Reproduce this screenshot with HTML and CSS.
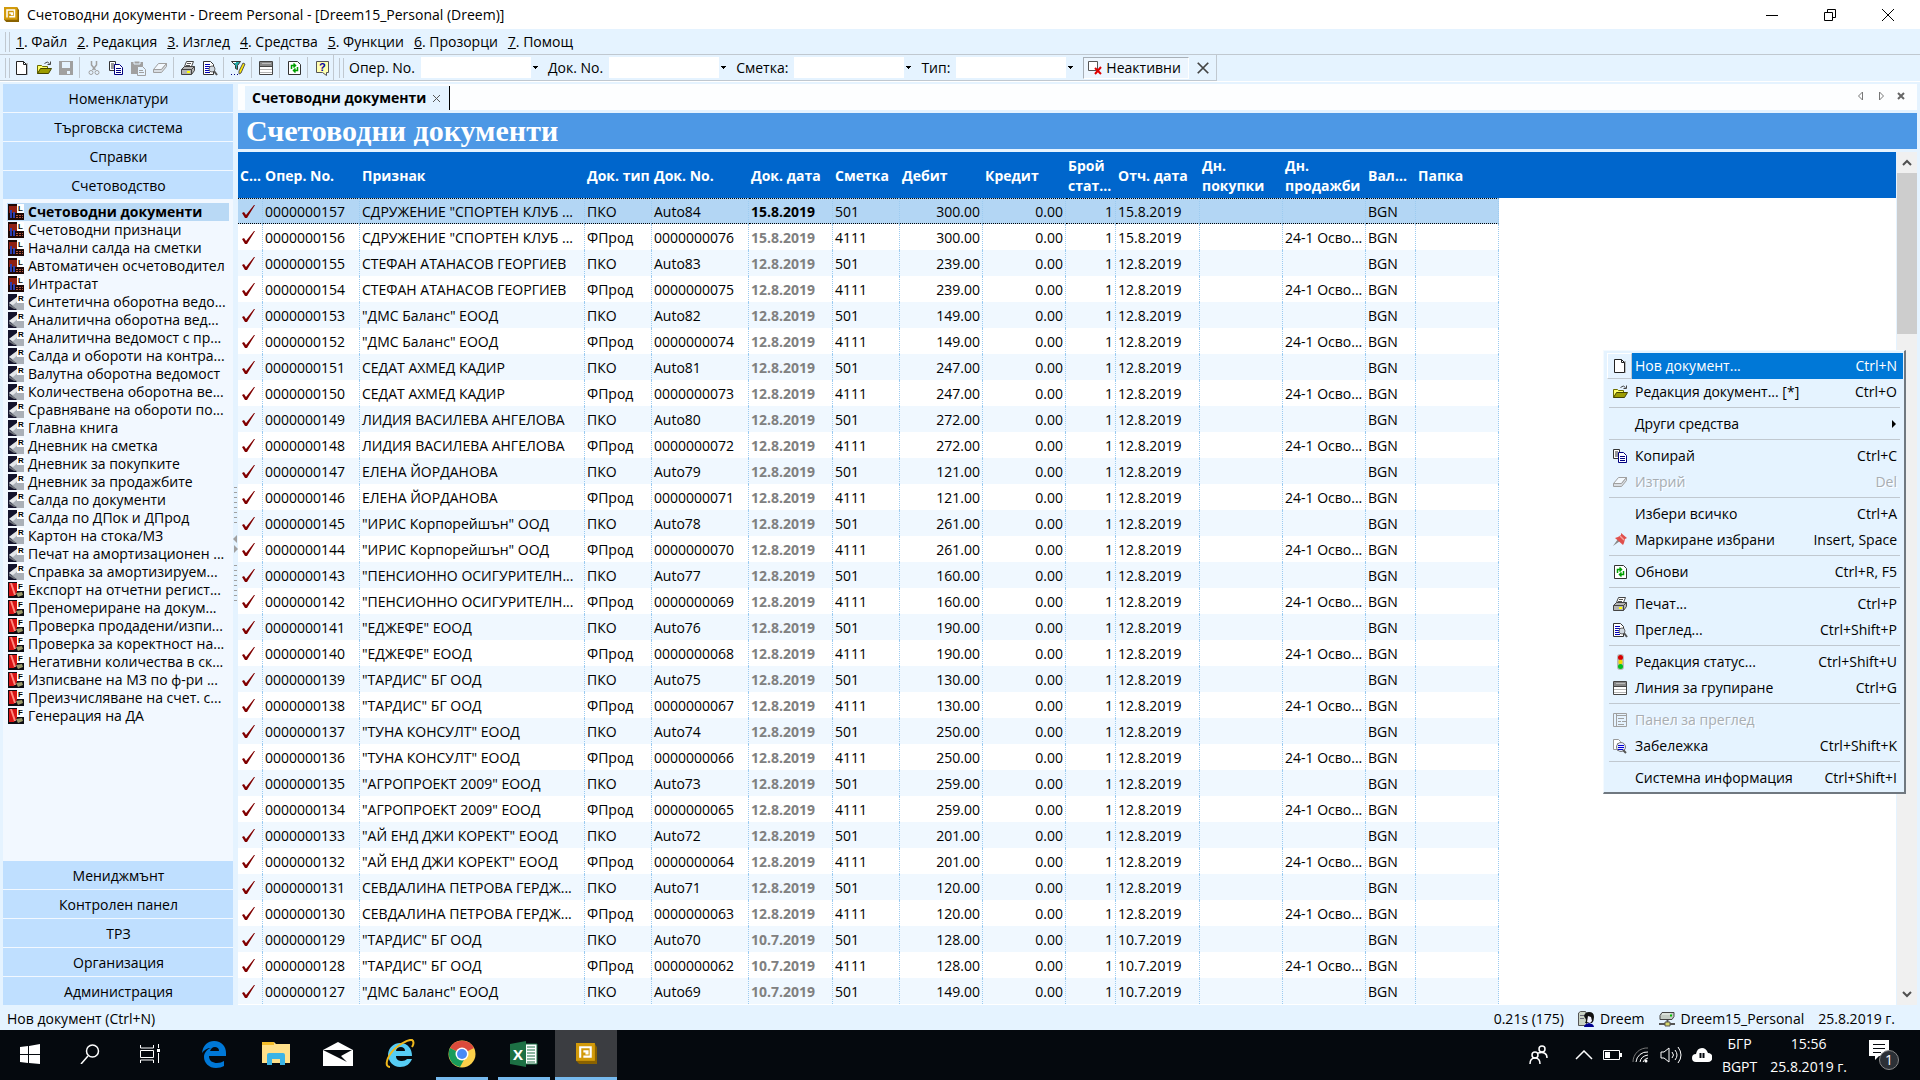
FILE: index.html
```html
<!DOCTYPE html>
<html lang="bg">
<head>
<meta charset="utf-8">
<title>Счетоводни документи - Dreem Personal</title>
<link rel="stylesheet" href="styles.css">
</head>

<body>
<!-- icons -->
<svg class="defs" aria-hidden="true">
	<symbol id="i-app" viewBox="0 0 20 20">
		<path d="M0 1h18l2 3v16H3l-3-3z" fill="#8a6200"/><path d="M0 0h18v17H0z" fill="#d29a0a"/>
		<path d="M3 3h12v11H7v-2h6V5H5v9H3z" fill="#fff"/><path d="M7 7h5v4H9V9H7z" fill="#fff"/>
	</symbol>
	<symbol id="i-new" viewBox="0 0 16 16">
		<path d="M4 3h10v12H4z" fill="#b9bcbf"/><path d="M2.500 1.500h7l3 3v10h-10z" fill="#fff" stroke="#222"/><path d="M9.500 1.500v3h3" fill="none" stroke="#222"/>
	</symbol>
	<symbol id="i-open" viewBox="0 0 16 16">
		<path d="M1.500 13.500v-8h4l1 1h5v3" fill="#ffff66" stroke="#6b6b00"/><path d="M1.500 13.500l3-5h11l-3 5z" fill="#9c9c00" stroke="#444400"/><path d="M8.500 3.500q3-3 5 0M14.500 1.500v3h-3" fill="none" stroke="#444"/>
	</symbol>
	<symbol id="i-save" viewBox="0 0 16 16">
		<path d="M1 1h14v14H1z" fill="#a0a0a0"/><path d="M4 2h8v6H4z" fill="#e5f3ff"/><path d="M9 11h3v3H9z" fill="#e5f3ff"/>
	</symbol>
	<symbol id="i-cut" viewBox="0 0 16 16">
		<path d="M5.500 1v4l4 5M10.500 1v4l-4 5" fill="none" stroke="#a0a0a0" stroke-width="1.500"/><circle cx="5" cy="12.500" r="2" fill="none" stroke="#a0a0a0"/><circle cx="11" cy="12.500" r="2" fill="none" stroke="#a0a0a0"/>
	</symbol>
	<symbol id="i-copy" viewBox="0 0 16 16">
		<path d="M1.500 1.500h6v9h-6z" fill="#fff" stroke="#333"/><path d="M3 4h3M3 6h3M3 8h3" stroke="#333"/>
		<path d="M6.500 4.500h5l3 3v7h-8z" fill="#fff" stroke="#000080"/><path d="M8 8.500h5M8 10.500h5M8 12.500h5" stroke="#000080"/>
	</symbol>
	<symbol id="i-paste" viewBox="0 0 16 16">
		<path d="M1 2h12v12H1z" fill="#a0a0a0"/><path d="M4 1h6v3H4z" fill="#a0a0a0" stroke="#e5f3ff"/><path d="M7.500 6.500h5l3 3v6h-8z" fill="#e5f3ff" stroke="#a0a0a0"/><path d="M9 10.500h4M9 12.500h5" stroke="#a0a0a0"/>
	</symbol>
	<symbol id="i-erase" viewBox="0 0 16 16">
		<path d="M6.500 3.500h8l-5 6h-8z" fill="#f3f9ff" stroke="#a0a0a0"/><path d="M1.500 9.500v3h8l5-6v-3l-5 6z" fill="#d8dde2" stroke="#a0a0a0"/>
	</symbol>
	<symbol id="i-print" viewBox="0 0 16 16">
		<path d="M4.500 6.500l2-5h7l-2 5z" fill="#fff" stroke="#444"/><path d="M7 3.500h4M6 5.500h4" stroke="#555"/>
		<path d="M1.500 9.500l3-3h10v4l-3 4h-10z" fill="#b4b4b4" stroke="#444"/><path d="M1.500 9.500h10l3-3M11.500 9.500v5" stroke="#444" fill="none"/><path d="M7 12h3" stroke="#ff0" stroke-width="2"/>
	</symbol>
	<symbol id="i-preview" viewBox="0 0 16 16">
		<path d="M1.500 1.500h7l3 3v10h-10z" fill="#fff" stroke="#333"/><path d="M3 4.500h5M3 6.500h6M3 8.500h4M3 10.500h4M3 12.500h5" stroke="#0000b4"/>
		<circle cx="10" cy="9" r="3" fill="#d0d8e0" stroke="#666"/><path d="M12 11l3 4" stroke="#555" stroke-width="2"/>
	</symbol>
	<symbol id="i-filter" viewBox="0 0 16 16">
		<path d="M1.500 1.500h9l-3 4v4l-2-1v-3z" fill="#2aa" stroke="#333"/><path d="M3 2.500h3" stroke="#fff"/>
		<path d="M15 4l-4 9-2 1v-3l4-8z" fill="#ffe900" stroke="#555"/><path d="M1 14.500h8" stroke="#000080" stroke-dasharray="1 2"/>
	</symbol>
	<symbol id="i-group" viewBox="0 0 16 16">
		<path d="M1.500 1.500h13v13h-13z" fill="#fff" stroke="#444"/><path d="M2 2h12v4H2z" fill="#888"/><path d="M4 3h9v1H4z" fill="#bbb"/><path d="M2 6.500h12" stroke="#444"/><path d="M2 9.500h12M2 12.500h12" stroke="#b5b5b5"/>
	</symbol>
	<symbol id="i-refresh" viewBox="0 0 16 16">
		<path d="M2.500 1.500h9l3 3v10h-12z" fill="#fff" stroke="#333"/><path d="M5.500 9v-3.500h3M7.500 3.500l2 2-2 2M11.500 7v3.500h-3M9.500 8.500l-2 2 2 2" fill="none" stroke="#00a000" stroke-width="1.500"/>
	</symbol>
	<symbol id="i-help" viewBox="0 0 16 16">
		<path d="M2.500 1.500h12v11h-2v3l-4-3h-6z" fill="#ffffb0" stroke="#555"/><text x="5" y="11" font-family="Liberation Sans" font-size="11" font-weight="bold" fill="#0000a0">?</text>
	</symbol>
	<symbol id="i-inactive" viewBox="0 0 16 16">
		<path d="M1.500 1.500h9v9h-9z" fill="#fff" stroke="#555"/><path d="M8 8l6 6M14 7l-6 7" stroke="#e00000" stroke-width="2"/>
	</symbol>
	<symbol id="i-close" viewBox="0 0 16 16"><path d="M2 2l12 12M14 2L2 14" stroke="#444" stroke-width="2"/></symbol>
	<symbol id="i-pin" viewBox="0 0 16 16">
		<path d="M8 9l-7 5 5-7z" fill="#888"/><path d="M9 1l6 5-2 1-1 4-1 2-8-7 3-1 3-2z" fill="#e0504d"/><path d="M8 4l4 4" stroke="#f7a09c" stroke-width="1.500"/>
	</symbol>
	<symbol id="i-light" viewBox="0 0 16 16">
		<rect x="5" y="0" width="7" height="16" rx="3" fill="#b9b9b9"/><circle cx="8.500" cy="3.500" r="2.500" fill="#d90000"/><circle cx="8.500" cy="8" r="2.200" fill="#f2d600"/><circle cx="8.500" cy="12.500" r="2.500" fill="#00c020"/>
	</symbol>
	<symbol id="i-panel" viewBox="0 0 16 16">
		<path d="M1.500 1.500h13v13h-13zM4.500 1.500v13" fill="none" stroke="#a0a0a0"/><path d="M5 3.500h9M6 6.500h6M6 9.500h3M10 9.500h4M6 12.500h6" stroke="#a0a0a0"/>
	</symbol>
	<symbol id="i-note" viewBox="0 0 16 16">
		<path d="M1.500 1.500h5l2 2v8h-7z" fill="#fff" stroke="#999"/><path d="M5.500 5.500h4l3 3v4h-7z" fill="#fff" stroke="#777"/><circle cx="9" cy="9" r="4.500" fill="#e8ecff" stroke="#777"/><path d="M6 7.500h6M6 9.500h6M6 11.500h5" stroke="#0000d0"/><path d="M11 12l3 3" stroke="#555" stroke-width="2"/>
	</symbol>
	<symbol id="i-list" viewBox="0 0 16 16">
		<path d="M0 0h16v16H0z" fill="#1c0806"/><path d="M1 2h9v4h4v3H1z" fill="#8e1f12"/><path d="M2 6h2v8H2zM5 8h2v6H5z" fill="#2c3fb0"/><path d="M8 11.500h7M8 13.500h7" stroke="#b4563c" stroke-dasharray="2 1"/><path d="M9 0h7v9H9z" fill="#fff"/>
		<text x="10" y="7" font-family="Liberation Sans" font-size="8" font-weight="bold">L</text>
	</symbol>
	<symbol id="i-report" viewBox="0 0 16 16">
		<path d="M0 0h16v16H0z" fill="#13132c"/><path d="M1 9l8-6 7 4v9H9z" fill="#aab0b8"/><path d="M1 9l8-6 3 2-7 6z" fill="#e4e7ea"/><path d="M1 10l8 5h-3l-5-3z" fill="#6c7078"/><path d="M9 0h7v9H9z" fill="#fff"/>
		<text x="10" y="7" font-family="Liberation Sans" font-size="8" font-weight="bold">R</text>
	</symbol>
	<symbol id="i-func" viewBox="0 0 16 16">
		<path d="M0 0h16v16H0z" fill="#0d0d14"/><path d="M1 1h8v9l-3 4H1z" fill="#d81414"/><path d="M2 1h2l4 12H6z" fill="#ff8a80"/><path d="M8 11l6-1 1 3-5 2z" fill="#9b9b6a"/><path d="M9 0h7v9H9z" fill="#fff"/>
		<text x="10" y="7" font-family="Liberation Sans" font-size="8" font-weight="bold">F</text>
	</symbol>
	<symbol id="i-check" viewBox="0 0 16 16"><path d="M2 9l2-1 2 3 8-10h1L7 14H5z" fill="#800000"/></symbol>
	<symbol id="i-user" viewBox="0 0 16 16">
		<path d="M.5 2l2-1.500h5l1 2v12h-8z" fill="#c9d2c4" stroke="#555"/><path d="M2 4.500h5M2 7.500h4" stroke="#667"/><path d="M6 5q1-4 5-4 5 0 5 5 0 4-2 6H7q2-3 0-5z" fill="#111"/><path d="M10 5l3 1 1 4-2 2-3-1z" fill="#f4f4ff"/><path d="M6 16q0-3 5-4 5 1 5 4z" fill="#000090"/>
	</symbol>
	<symbol id="i-server" viewBox="0 0 16 16">
		<path d="M1 4.500l2-3h12v4l-2 3H1z" fill="#c4ccc4" stroke="#444"/><path d="M3 3h9" stroke="#f2f6f2"/><path d="M11 4.500h2" stroke="#00c000" stroke-width="2"/><path d="M0 13h16M8.500 9v3" stroke="#555" stroke-width="2"/><path d="M6 11h5v4H6z" fill="#d6d66a" stroke="#555"/>
	</symbol>
</svg>

<header class="titlebar">
	<svg class="ico"><use href="#i-app"/></svg>
	<span class="caption">Счетоводни документи - Dreem Personal - [Dreem15_Personal (Dreem)]</span>
	<button aria-label="Минимизирай"><svg width="14" height="14"><path d="M1 7.500h12" stroke="#000"/></svg></button>
	<button aria-label="Възстанови"><svg width="14" height="14"><path d="M1.500 4.500h8v8h-8zM4.500 4.500v-3h8v8h-3" fill="none" stroke="#000"/></svg></button>
	<button aria-label="Затвори"><svg width="14" height="14"><path d="M1 1l12 12M13 1L1 13" stroke="#000"/></svg></button>
</header>

<nav class="menubar">
	<i class="grip"></i>
	<a href="#"><u>1</u>. Файл</a><a href="#"><u>2</u>. Редакция</a><a href="#"><u>3</u>. Изглед</a><a href="#"><u>4</u>. Средства</a><a href="#"><u>5</u>. Функции</a><a href="#"><u>6</u>. Прозорци</a><a href="#"><u>7</u>. Помощ</a>
</nav>

<div class="tools">
	<div class="bar">
		<i class="grip"></i>
		<button aria-label="Нов"><svg class="ico"><use href="#i-new"/></svg></button>
		<button aria-label="Отвори"><svg class="ico"><use href="#i-open"/></svg></button>
		<button aria-label="Запис" disabled><svg class="ico"><use href="#i-save"/></svg></button>
		<i class="sep"></i>
		<button aria-label="Изрежи" disabled><svg class="ico"><use href="#i-cut"/></svg></button>
		<button aria-label="Копирай"><svg class="ico"><use href="#i-copy"/></svg></button>
		<button aria-label="Постави" disabled><svg class="ico"><use href="#i-paste"/></svg></button>
		<button aria-label="Изтрий" disabled><svg class="ico"><use href="#i-erase"/></svg></button>
		<i class="sep"></i>
		<button aria-label="Печат"><svg class="ico"><use href="#i-print"/></svg></button>
		<button aria-label="Преглед"><svg class="ico"><use href="#i-preview"/></svg></button>
		<i class="sep"></i>
		<button aria-label="Филтър"><svg class="ico"><use href="#i-filter"/></svg></button>
		<i class="sep"></i>
		<button aria-label="Линия за групиране"><svg class="ico"><use href="#i-group"/></svg></button>
		<i class="sep"></i>
		<button aria-label="Обнови"><svg class="ico"><use href="#i-refresh"/></svg></button>
		<i class="sep"></i>
		<button aria-label="Помощ"><svg class="ico"><use href="#i-help"/></svg></button>
	</div>
	<div class="bar filters">
		<i class="grip"></i>
		<label for="oper">Опер. No.</label><select id="oper"></select>
		<label for="doc">Док. No.</label><select id="doc"></select>
		<label for="acc">Сметка:</label><select id="acc"></select>
		<label for="type">Тип:</label><select id="type"></select>
		<button class="inactive"><svg class="ico"><use href="#i-inactive"/></svg>Неактивни</button>
		<button class="clear" aria-label="Изчисти"><svg class="ico"><use href="#i-close"/></svg></button>
	</div>
</div>

<main class="main">
	<aside class="side">
		<button>Номенклатури</button>
		<button>Търговска система</button>
		<button>Справки</button>
		<button>Счетоводство</button>
		<ul id="tree"></ul>
		<button>Мениджмънт</button>
		<button>Контролен панел</button>
		<button>ТРЗ</button>
		<button>Организация</button>
		<button>Администрация</button>
	</aside>
	<div class="splitter">
		<i class="dots"></i>
		<svg width="5" height="20"><path d="M4 0v8L0 4zM1 10v8l4-4z" fill="#a0a0a0"/></svg>
		<i class="dots"></i>
	</div>
	<section class="content">
		<div class="tabs">
			<a class="tab" href="#">Счетоводни документи <svg width="9" height="9"><path d="M1 1l7 7M8 1L1 8" stroke="#555"/></svg></a>
			<span class="tabnav">
				<button aria-label="Назад"><svg width="8" height="10"><path d="M5.500 1v8l-4-4z" fill="none" stroke="#777"/></svg></button>
				<button aria-label="Напред"><svg width="8" height="10"><path d="M2.500 1v8l4-4z" fill="none" stroke="#777"/></svg></button>
				<button aria-label="Затвори раздела"><svg width="8" height="10"><path d="M1 2l6 6M7 2L1 8" stroke="#666" stroke-width="2"/></svg></button>
			</span>
		</div>
		<h1>Счетоводни документи</h1>
		<div class="gridwrap">
			<div class="scroller">
				<table class="grid">
					<colgroup>
						<col class="w25"><col class="w97"><col class="w225"><col class="w67"><col class="w97"><col class="w84"><col class="w67"><col class="w83"><col class="w83"><col class="w50"><col class="w84"><col class="w83"><col class="w83"><col class="w50"><col class="w83"><col>
					</colgroup>
					<thead>
						<tr><th>С...</th><th>Опер. No.</th><th>Признак</th><th>Док. тип</th><th>Док. No.</th><th>Док. дата</th><th>Сметка</th><th>Дебит</th><th>Кредит</th><th>Брой<br>стат...</th><th>Отч. дата</th><th>Дн.<br>покупки</th><th>Дн.<br>продажби</th><th>Вал...</th><th>Папка</th><th></th></tr>
					</thead>
					<tbody id="rows"></tbody>
				</table>
			</div>
			<div class="vscroll">
				<button aria-label="Нагоре"><svg width="10" height="7"><path d="M1 6l4-4 4 4" fill="none" stroke="#505050" stroke-width="2"/></svg></button>
				<i class="thumb"></i>
				<button aria-label="Надолу"><svg width="10" height="7"><path d="M1 1l4 4 4-4" fill="none" stroke="#505050" stroke-width="2"/></svg></button>
			</div>
		</div>
	</section>
</main>

<div class="popup" id="popup"></div>

<footer class="status">
	<span class="hint">Нов документ (Ctrl+N)</span>
	<span>0.21s (175)</span>
	<span><svg class="ico"><use href="#i-user"/></svg>Dreem</span>
	<span><svg class="ico"><use href="#i-server"/></svg>Dreem15_Personal</span>
	<span>25.8.2019 г.</span>
</footer>

<div class="taskbar">
	<button class="sys" aria-label="Старт"><svg width="20" height="20"><path d="M0 3l8-1v8H0zM9 2l11-2v10H9zM0 11h8v8l-8-1zM9 11h11v9L9 19z" fill="#fff"/></svg></button>
	<button class="sys" aria-label="Търсене"><svg width="20" height="20"><circle cx="12.500" cy="7" r="6" fill="none" stroke="#fff" stroke-width="1.500"/><path d="M8 12l-7 8" stroke="#fff" stroke-width="1.500"/></svg></button>
	<button class="sys" aria-label="Изглед на задачите"><svg width="20" height="20"><path d="M.5 1v3h13V1M.5 19v-3h13v3M.5 6.500h13v7H.5z" fill="none" stroke="#fff"/><path d="M18.500 0v4M18.500 9v10" stroke="#fff"/><path d="M17 5h3v3h-3z" fill="#fff"/></svg></button>
	<button aria-label="Edge"><svg width="26" height="28" viewBox="0 0 26 28"><path d="M1 13C2 5 7 1 13 1c8 0 12 6 12 12v3H8c0 5 4 7 8 7 3 0 5-1 7-2v5c-2 1-5 2-8 2C8 28 3 23 3 17c0-4 3-8 7-9-4 0-7 2-9 5zm8-2h9c0-3-2-4-4-4-3 0-4 2-5 4z" fill="#0078d7"/></svg></button>
	<button aria-label="Explorer"><svg width="28" height="26"><path d="M0 1h12l2 2h14v19H0z" fill="#ffe08a"/><path d="M0 1h12v3H0z" fill="#f4bd2a"/><path d="M5 24V14q0-2 2-2h14q2 0 2 2v10h-5v-6h-8v6z" fill="#3bb4e6"/></svg></button>
	<button aria-label="Поща"><svg width="30" height="24"><path d="M0 8l15-8 15 8v16H0z" fill="#fff"/><path d="M1 8h28l-11 6 6 6L0 8z" fill="#05090e"/></svg></button>
	<button aria-label="Internet Explorer"><svg width="30" height="30"><path d="M3 15C4 8 9 4 15 4c8 0 12 6 12 13H11c0 4 3 5 6 5 2 0 4-1 5-2h5c-2 5-6 8-12 8C8 28 3 22 3 15zm8-3h9c0-3-2-4-4-4-3 0-5 2-5 4z" fill="#56cdf5"/><path d="M5 28c-5 0-4-7 1-14S23 0 27 1c2 1 2 4 0 7" fill="none" stroke="#f0b81c" stroke-width="2"/></svg></button>
	<button class="run" aria-label="Chrome"><svg width="28" height="28"><circle cx="14" cy="14" r="13.500" fill="#fcd04a"/><path d="M14 14L2 8A13.500 13.500 0 0 1 26 8z" fill="#db4b3c"/><path d="M2 8a13.500 13.500 0 0 0 10 19l5-9-3-4z" fill="#189c5a"/><circle cx="14" cy="14" r="6.500" fill="#fff"/><circle cx="14" cy="14" r="5" fill="#4a8af4"/></svg></button>
	<button class="run" aria-label="Excel"><svg width="28" height="26"><path d="M15 3h12v20H15z" fill="#fff" stroke="#1d7044"/><path d="M17 6h8M17 9h8M17 12h8M17 15h8M17 18h8M17 21h8" stroke="#1d7044"/><path d="M0 3l16-3v26L0 23z" fill="#1d7044"/><text x="3" y="19" font-family="Open Sans" font-size="15" font-weight="bold" fill="#fff">X</text></svg></button>
	<button class="run active" aria-label="Dreem"><svg width="21" height="21"><use href="#i-app"/></svg></button>

	<div class="tray">
		<svg class="people" width="20" height="20"><circle cx="13" cy="4" r="3" fill="none" stroke="#fff" stroke-width="1.500"/><circle cx="6" cy="10" r="3" fill="none" stroke="#fff" stroke-width="1.500"/><path d="M9 8q9-2 9 5M1 19q0-6 5-6t5 6" fill="none" stroke="#fff" stroke-width="1.500"/></svg>
		<svg width="18" height="10"><path d="M1 9l8-8 8 8" fill="none" stroke="#fff" stroke-width="1.500"/></svg>
		<svg width="19" height="12"><path d="M.5 1.500h16v9H.5z" fill="none" stroke="#fff"/><path d="M17 4h2v4h-2zM2 3h5v6H2z" fill="#fff"/></svg>
		<svg width="18" height="16"><g fill="none"><path d="M1 15A14 14 0 0 1 16 1" stroke="#777"/><path d="M4 15A11 11 0 0 1 16 5M8 15q1-6 8-7M11 15q1-3 5-4" stroke="#fff"/></g><circle cx="14" cy="14" r="1.500" fill="#fff"/></svg>
		<svg width="22" height="18"><path d="M1 6h3l5-4v14l-5-4H1zM12 6q3 3 0 6M15 4q4 5 0 10M18 1q6 8 0 16" fill="none" stroke="#fff"/></svg>
		<svg width="20" height="14"><path d="M4 14a4 4 0 0 1 0-8q1-6 6-6 4 0 6 5a4 4 0 0 1 0 9z" fill="#fff"/><path d="M8.500 5v5M11.500 5v5" stroke="#05090e" stroke-width="2"/></svg>
		<div class="lang">БГР<br>BGPT</div>
		<div class="clock">15:56<br>25.8.2019 г.</div>
		<svg width="32" height="32"><path d="M1 1h20v16H11l-4 4v-4H1z" fill="#fff"/><path d="M5 5.500h12M5 9.500h12M5 13.500h8" stroke="#05090e"/><circle cx="21" cy="21" r="9.500" fill="#2c3036" stroke="#888"/><text x="17" y="26" font-family="Open Sans" font-size="14" fill="#fff">1</text></svg>
	</div>
</div>

<script src="script.js"></script>
</body>
</html>
```
FILE: styles.css
```css
* {box-sizing:border-box; margin:0; padding:0;}
body {height:100vh; display:flex; flex-direction:column; overflow:hidden; position:relative; background:#e5f3ff; color:#000; font:14px/20px "Open Sans","Noto Sans",sans-serif;}
button {border:0; background:none; font:inherit; color:inherit; display:flex; align-items:center; justify-content:center;}
a {color:inherit; text-decoration:none;}
ul {list-style:none;}
svg {flex:none; display:block;}
.defs {display:none;}
.ico {width:16px; height:16px;}

/* title and menu */
.titlebar {height:29px; flex:none; background:#fff; display:flex; align-items:center; padding:0 3px 0 4px;}
.titlebar .ico {width:15px; height:15px;}
.titlebar .caption {flex:1; margin-left:8px;}
.titlebar button {width:58px; height:29px;}
.menubar {height:26px; flex:none; display:flex; align-items:center; gap:10px; border-bottom:1px solid #c0c8d0; padding:1px 0 0 5px;}
.menubar .grip {margin-right:-4px;}
.grip {width:5px; height:20px; border:1px solid #c0c8d0; border-width:0 1px; flex:none;}

/* toolbars */
.tools {height:27px; flex:none; display:flex; border-bottom:1px solid #fff;}
.bar {display:flex; align-items:center; height:26px; padding-left:5px; border:1px solid #c0c8d0; border-width:0 1px 1px 0;}
.bar .grip {margin-right:1px;}
.bar button {width:22px; height:22px;}
.sep {width:1px; height:21px; margin:0 3px 0 2px; background:#c0c8d0;}
.filters .grip {margin-right:5px;}
.filters label {margin-right:6px;}
.filters select {
	width:120px; height:21px; margin-right:7px; border:0; appearance:none;
	background:
		linear-gradient(#000,#000) no-repeat right 3px top 9px/5px 1px,
		linear-gradient(#000,#000) no-repeat right 4px top 10px/3px 1px,
		linear-gradient(#000,#000) no-repeat right 5px top 11px/1px 1px,
		linear-gradient(90deg,#fff calc(100% - 10px),#e5f3ff 0);
}
.filters .inactive {width:106px; justify-content:flex-start; padding-left:3px; gap:3px; border:1px solid; border-color:#a8b0b8 #fff #fff #a8b0b8; background:#edf6ff;}
.filters .clear {width:27px;}
.filters .clear .ico {width:14px; height:14px;}

/* left side */
.main {flex:1; min-height:0; display:flex; padding:2px 3px 0;}
.side {width:230px; display:flex; flex-direction:column; gap:1px; background:#f2f8ff;}
.side button {height:28px; flex:none; padding:1px 0 0 1px; background:#bfdfff;}
.side ul {flex:1; min-height:0; padding:3px 4px 0;}
.side li {height:18px; line-height:18px; display:flex; gap:4px; align-items:center; padding-left:1px; white-space:nowrap; overflow:hidden;}
.side li.ac {font-weight:bold; background:#b9d9f5;}
.splitter {width:5px; display:flex; flex-direction:column; align-items:center; justify-content:center; gap:10px;}
.splitter .dots {width:3px; height:38px; background:repeating-linear-gradient(#a0a0a0 0 1px,transparent 1px 5px);}

/* content */
.content {flex:1; min-width:0; display:flex; flex-direction:column;}
.tabs {height:26px; flex:none; display:flex; justify-content:space-between; background:#fdfeff; padding:2px 6px 0 7px;}
.tab {display:flex; align-items:center; gap:6px; padding:0 8px 0 7px; font-weight:bold; background:#e5f3ff; border-right:1px solid #000;}
.tabnav {display:flex;}
.tabnav button {width:20px; height:20px;}
h1 {height:36px; flex:none; margin:3px 0; padding-left:8px; background:#4d98e5; color:#fff; font:bold 30px/36px "Liberation Serif",serif;}
.gridwrap {flex:1; min-height:0; display:flex; gap:1px;}
.scroller {flex:1; min-width:0; overflow:hidden; background:#fff;}
.grid {width:100%; table-layout:fixed; border-collapse:separate; border-spacing:0;}
.w25 {width:25px;}
.w50 {width:50px;}
.w67 {width:67px;}
.w83 {width:83px;}
.w84 {width:84px;}
.w97 {width:97px;}
.w225 {width:225px;}
.grid th {height:46px; padding:1px 2px 0; background:#06c; color:#fff; text-align:left; vertical-align:middle; white-space:nowrap; overflow:hidden;}
.grid td {height:26px; line-height:20px; padding:1px 2px 0; border-right:1px dotted #9ccbf0; white-space:nowrap; overflow:hidden; background:#fff;}
.grid tr.odd td {background:#f0f8ff;}
.grid tr td:last-child {background:#fff; border:0;}
.grid tr.ac td:not(:last-child) {background:#b3d6f4; border-top:1px dotted #000; border-bottom:1px dotted #000;}
.grid .num {text-align:right;}
.grid .date {font-weight:bold; color:#808080;}
.grid .ac .date {color:#000;}
.vscroll {width:20px; display:flex; flex-direction:column; background:#f0f0f0;}
.vscroll button {height:21px;}
.vscroll .thumb {height:161px; background:#cdcdcd; margin-bottom:auto;}

/* context menu */
.popup {position:absolute; right:14px; top:350px; width:303px; padding:2px 1px 1px 3px; background:#e5f3ff; border:1px solid #f4faff; border-right:2px solid #707880; border-bottom:2px solid #707880;}
.popup button {width:100%; height:26px; justify-content:flex-start; padding-right:6px;}
.popup .pic {width:25px; height:26px; flex:none; display:flex; align-items:center; justify-content:center;}
.popup .name {flex:1; text-align:left; line-height:26px; padding-left:3px;}
.popup .ac {padding-right:0;}
.popup .ac .pic {border:1px solid; border-color:#fff #c0c8d0 #c0c8d0 #fff;}
.popup .ac .name {display:flex; justify-content:space-between; background:#0078d7; color:#fff; padding-right:6px;}
.popup button:disabled {color:#a8adb2; text-shadow:1px 1px #fff;}
.popup hr {height:1px; border:0; margin:2px 3px 3px 2px; background:#c0c8d0;}

/* status and taskbar */
.status {height:25px; flex:none; display:flex; align-items:center; gap:14px; padding:2px 25px 0 7px;}
.status .hint {flex:1;}
.status span {display:flex; align-items:center; gap:6px;}
.taskbar {height:50px; flex:none; display:flex; background:#05090e; color:#fff;}
.taskbar>button {width:62px; height:50px; border-bottom:3px solid transparent;}
.taskbar>.sys {width:60px;}
.taskbar>.sys+button:not(.sys) {margin-left:3px;}
.taskbar>.run {width:52px; margin:0 5px; border-color:#76b9ed;}
.taskbar>.active {width:62px; margin:0; background:#3b3d41;}
.tray {margin-left:auto; display:flex; align-items:center; gap:10px; padding-right:20px;}
.tray .people {margin-right:16px;}
.lang, .clock {text-align:center; line-height:23px;}
.lang {margin-right:3px;}
.clock {margin-right:11px;}
```
FILE: script.js
```javascript
var tree = [
	["list", "Счетоводни документи"],
	["list", "Счетоводни признаци"],
	["list", "Начални салда на сметки"],
	["list", "Автоматичен осчетоводител"],
	["list", "Интрастат"],
	["report", "Синтетична оборотна ведо..."],
	["report", "Аналитична оборотна вед..."],
	["report", "Аналитична ведомост с пр..."],
	["report", "Салда и обороти на контра..."],
	["report", "Валутна оборотна ведомост"],
	["report", "Количествена оборотна ве..."],
	["report", "Сравняване на обороти по..."],
	["report", "Главна книга"],
	["report", "Дневник на сметка"],
	["report", "Дневник за покупките"],
	["report", "Дневник за продажбите"],
	["report", "Салда по документи"],
	["report", "Салда по ДПок и ДПрод"],
	["report", "Картон на стока/МЗ"],
	["report", "Печат на амортизационен ..."],
	["report", "Справка за амортизируем..."],
	["func", "Експорт на отчетни регист..."],
	["func", "Преномериране на докум..."],
	["func", "Проверка продадени/изпи..."],
	["func", "Проверка за коректност на..."],
	["func", "Негативни количества в ск..."],
	["func", "Изписване на МЗ по ф-ри ..."],
	["func", "Преизчисляване на счет. с..."],
	["func", "Генерация на ДА"]
];

//всеки клиент има ПКО и ФПрод
var docs = [
	['СДРУЖЕНИЕ "СПОРТЕН КЛУБ ...', "15.8.2019", 300],
	["СТЕФАН АТАНАСОВ ГЕОРГИЕВ", "12.8.2019", 239],
	['"ДМС Баланс" ЕООД', "12.8.2019", 149],
	["СЕДАТ АХМЕД КАДИР", "12.8.2019", 247],
	["ЛИДИЯ ВАСИЛЕВА АНГЕЛОВА", "12.8.2019", 272],
	["ЕЛЕНА ЙОРДАНОВА", "12.8.2019", 121],
	['"ИРИС Корпорейшън" ООД', "12.8.2019", 261],
	['"ПЕНСИОННО ОСИГУРИТЕЛН...', "12.8.2019", 160],
	['"ЕДЖЕФЕ" ЕООД', "12.8.2019", 190],
	['"ТАРДИС" БГ ООД', "12.8.2019", 130],
	['"ТУНА КОНСУЛТ" ЕООД', "12.8.2019", 250],
	['"АГРОПРОЕКТ 2009" ЕООД', "12.8.2019", 259],
	['"АЙ ЕНД ДЖИ КОРЕКТ" ЕООД', "12.8.2019", 201],
	["СЕВДАЛИНА ПЕТРОВА ГЕРДЖ...", "12.8.2019", 120],
	['"ТАРДИС" БГ ООД', "10.7.2019", 128],
	['"ДМС Баланс" ЕООД', "10.7.2019", 149]
];

var menu = [
	["new", "Нов документ...", "Ctrl+N"],
	["open", "Редакция документ... [*]", "Ctrl+O"],
	null,
	["", "Други средства", '<svg width="5" height="8"><path d="M0 0v8l4-4z"/></svg>'],
	null,
	["copy", "Копирай", "Ctrl+C"],
	["erase", "Изтрий", "Del", true],
	null,
	["", "Избери всичко", "Ctrl+A"],
	["pin", "Маркиране избрани", "Insert, Space"],
	null,
	["refresh", "Обнови", "Ctrl+R, F5"],
	null,
	["print", "Печат...", "Ctrl+P"],
	["preview", "Преглед...", "Ctrl+Shift+P"],
	null,
	["light", "Редакция статус...", "Ctrl+Shift+U"],
	["group", "Линия за групиране", "Ctrl+G"],
	null,
	["panel", "Панел за преглед", "", true],
	["note", "Забележка", "Ctrl+Shift+K"],
	null,
	["", "Системна информация", "Ctrl+Shift+I"]
];

function icon(name){
	return name ? '<svg class="ico"><use href="#i-' + name + '"/></svg>' : '';
}

document.querySelector("#tree").innerHTML = tree.map(function(t, i){
	return '<li' + (i == 0 ? ' class="ac"' : '') + '>' + icon(t[0]) + '<a href="#">' + t[1] + '</a></li>';
}).join("");

var html = "";
for(var i = 0; i < 31; i++){
	var k = Math.floor(i / 2),
		d = docs[k],
		pko = i % 2 == 0;
	html += '<tr class="' + (i == 0 ? 'ac' : pko ? 'odd' : '') + '"><td>' + icon("check") + '</td>'
		+ '<td>0000000' + (157 - i) + '</td><td>' + d[0] + '</td>'
		+ '<td>' + (pko ? 'ПКО' : 'ФПрод') + '</td>'
		+ '<td>' + (pko ? 'Auto' + (84 - k) : '00000000' + (76 - k)) + '</td>'
		+ '<td class="date">' + d[1] + '</td><td>' + (pko ? '501' : '4111') + '</td>'
		+ '<td class="num">' + d[2] + '.00</td><td class="num">0.00</td><td class="num">1</td>'
		+ '<td>' + d[1] + '</td><td></td><td>' + (pko ? '' : '24-1 Осво...') + '</td>'
		+ '<td>BGN</td><td></td><td></td></tr>';
}
document.querySelector("#rows").innerHTML = html;

document.querySelector("#popup").innerHTML = menu.map(function(m, i){
	if(!m) return '<hr>';
	var pic = '<span class="pic">' + icon(m[0]) + '</span>';
	if(i == 0) return '<button class="ac">' + pic + '<span class="name">' + m[1] + '<span>' + m[2] + '</span></span></button>';
	return '<button' + (m[3] ? ' disabled' : '') + '>' + pic + '<span class="name">' + m[1] + '</span><span>' + m[2] + '</span></button>';
}).join("");
```
